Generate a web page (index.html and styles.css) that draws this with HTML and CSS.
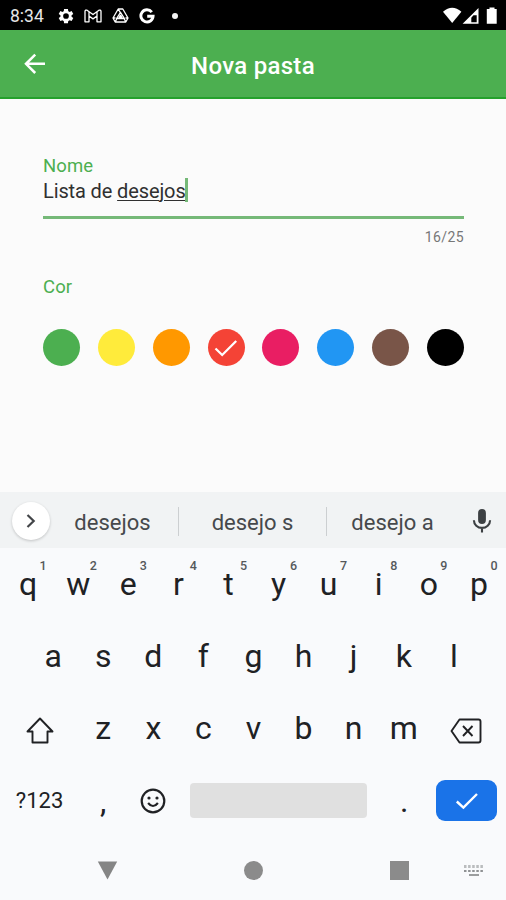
FILE: index.html
```html
<!DOCTYPE html>
<html lang="pt">
<head>
<meta charset="utf-8">
<title>Nova pasta</title>
<link rel="stylesheet" href="styles.css">
</head>
<body>
<div class="screen">
  <header class="status">
    <span class="time">8:34</span>
    <svg class="st-gear" width="18" height="18" viewBox="0 0 24 24" fill="#fff"><path fill-rule="evenodd" d="M19.4 13a7.500 7.500 0 0 0 0-2l2.300-1.700-2.200-3.900-2.700 1.100a8 8 0 0 0-1.800-1L14.600 2.500H9.400L9 5.500a8 8 0 0 0-1.800 1L4.500 5.400 2.300 9.300 4.600 11a7.500 7.500 0 0 0 0 2l-2.300 1.700 2.200 3.900 2.700-1.100a8 8 0 0 0 1.800 1l.4 3h5.200l.4-3a8 8 0 0 0 1.800-1l2.700 1.100 2.200-3.900zM12 8.200a3.800 3.800 0 1 1 0 7.600 3.800 3.800 0 0 1 0-7.600z"/></svg>
    <svg class="st-mail" width="18" height="14" viewBox="0 0 18 14" fill="none" stroke="#fff" stroke-width="1.300" stroke-linejoin="round"><path d="M1 12.800V2.200Q1.500.6 3 1.200L9 5.600l6-4.400q1.500-.6 2 1v10.600h-4V7L9 9.900 5 7v5.800zM5 7V2.800M13 7V2.800"/></svg>
    <svg class="st-drive" width="17" height="15" viewBox="0 0 17 15" fill="none" stroke="#fff" stroke-width="1.300" stroke-linejoin="round"><path d="M6.200 1h4.600l5.200 9-2.200 4H3.200L1 10zM6.200 1l2.300 4M1 10l2.500 0M16 10h-2.500M8.500 4.300l3.900 6.200H4.600zM8.500 7.200l1.500 2.300H7zM3.200 14l1.600-3.300M13.800 14l-1.600-3.300"/></svg>
    <svg class="st-google" width="16" height="16" viewBox="0 0 16 16" fill="none" stroke="#fff" stroke-width="2.900"><path d="M12.800 4.100A6.100 6.100 0 1 0 14.100 8.200H8.200"/></svg>
    <i class="st-dot"></i>
    <svg class="st-net" width="56" height="18" viewBox="0 0 56 18" fill="#fff"><path d="M0 4.700Q9.200-3.300 18.400 4.700L9.200 16z"/><path fill-rule="evenodd" d="M19.600 16.700 35.500 1v15.700zM28.300 15.200h5.400V8.300h-3.200l-2.200 2.400z"/><path d="M46.500 2V.4h5V2h2.200v14.700h-9.900V2z"/></svg>
  </header>

  <div class="appbar">
    <svg class="back" width="22" height="22" viewBox="0 0 22 22" fill="none" stroke="#fff" stroke-width="2.500"><path d="M21 10.800H2.500M11.200 1.600 2 10.800l9.200 9.200"/></svg>
    <h1>Nova pasta</h1>
  </div>

  <main class="form">
    <label class="label">Nome</label>
    <div class="field"><span>Lista de <u>desejos</u></span><i class="caret"></i></div>
    <div class="count">16/25</div>
    <div class="label cor">Cor</div>
    <div class="swatches">
      <i class="sw green"></i><i class="sw yellow"></i><i class="sw orange"></i>
      <i class="sw red"><svg width="24" height="20" viewBox="0 0 24 20" fill="none" stroke="#fff" stroke-width="2.300"><path d="M1.500 10.500 8.200 17 22.200 3"/></svg></i>
      <i class="sw pink"></i><i class="sw blue"></i><i class="sw brown"></i><i class="sw black"></i>
    </div>
  </main>

  <div class="suggest">
    <div class="more"><svg width="12" height="16" viewBox="0 0 12 16" fill="none" stroke="#424548" stroke-width="2.200"><path d="M2.500 2 8.700 8l-6.200 6"/></svg></div>
    <span class="word w1">desejos</span><span class="word w2">desejo s</span><span class="word w3">desejo a</span>
    <svg class="mic" width="20" height="26" viewBox="0 0 20 26" fill="none" stroke="#3c4043" stroke-width="2.100"><rect x="6.100" y="1" width="7.800" height="15" rx="3.900" fill="#3c4043" stroke="none"/><path d="M1.900 12.300a8.100 7.600 0 0 0 16.200 0M10 19.900v4.600"/></svg>
  </div>

  <div class="keys">
    <div class="row r1">
      <b>q<sup>1</sup></b><b>w<sup>2</sup></b><b>e<sup>3</sup></b><b>r<sup>4</sup></b><b>t<sup>5</sup></b><b>y<sup>6</sup></b><b>u<sup>7</sup></b><b>i<sup>8</sup></b><b>o<sup>9</sup></b><b>p<sup>0</sup></b>
    </div>
    <div class="row r2"><b>a</b><b>s</b><b>d</b><b>f</b><b>g</b><b>h</b><b>j</b><b>k</b><b>l</b></div>
    <div class="row r3">
      <b class="wide"><svg class="shift" width="28" height="27" viewBox="0 0 28 27" fill="none" stroke="#202124" stroke-width="1.900" stroke-linejoin="round"><path d="M14 1.500 26.500 14.500H21.500V25.500H6.500V14.500H1.500z"/></svg></b>
      <b>z</b><b>x</b><b>c</b><b>v</b><b>b</b><b>n</b><b>m</b>
      <b class="wide"><svg class="del" width="32" height="26" viewBox="0 0 32 26" fill="none" stroke="#202124" stroke-width="1.900" stroke-linejoin="round"><path d="M9.500 1.500H28.500Q30.500 1.500 30.500 3.500V22.500Q30.500 24.500 28.500 24.500H9.500L1.500 13z"/><path d="M13 8l9.500 10M22.500 8 13 18"/></svg></b>
    </div>
    <div class="row r4">
      <b class="wide sym">?123</b><b class="punct">,</b>
      <b><svg width="26" height="26" viewBox="0 0 26 26" fill="none" stroke="#202124" stroke-width="2.200"><circle cx="13" cy="13" r="11.300"/><path d="M8.100 15q4.900 6 9.800 0"/><circle cx="9" cy="10" r="1.600" fill="#202124" stroke="none"/><circle cx="17" cy="10" r="1.600" fill="#202124" stroke="none"/></svg></b>
      <b class="space"></b><b class="punct">.</b>
      <b class="enter"><svg width="24" height="20" viewBox="0 0 24 20" fill="none" stroke="#fff" stroke-width="2.400"><path d="M1.800 10.500 8.400 16.600 22 3"/></svg></b>
    </div>
  </div>

  <footer class="nav">
    <svg width="21" height="19" viewBox="0 0 21 19" fill="#858585"><path d="M.8.500H20.200L10.500 18.500z"/></svg>
    <i class="home"></i>
    <i class="recent"></i>
    <svg class="kb" width="22" height="13" viewBox="0 0 22 13" fill="none" stroke="#909294"><path stroke-width="3" stroke-dasharray="2.500 1.600" opacity=".6" d="M1 2.500h20"/><path stroke-width="2" stroke-dasharray="2.500 1.600" d="M1 7h20"/><path stroke-width="1.800" d="M6 11h10"/></svg>
  </footer>
</div>
</body>
</html>
```
FILE: styles.css
```css
* { box-sizing: border-box; }
body { margin: 0; font-family: Roboto, "Liberation Sans", sans-serif; }
i, b { font-style: normal; font-weight: 400; }
svg { display: block; flex: none; }
.screen { width: 506px; height: 900px; display: flex; flex-direction: column; background: #fbfbfb; overflow: hidden; }

.status { height: 30px; flex: none; background: #000; display: flex; align-items: center; padding: 1px 0 0 10px; color: #e6e6e6; }
.time { width: 47px; font-size: 17.500px; line-height: 29px; padding-top: 1px; }
.st-gear { margin-right: 9px; }
.st-mail { margin-right: 10px; }
.st-drive { margin-right: 10px; }
.st-google { margin-right: 17px; }
.st-dot { width: 6px; height: 6px; border-radius: 50%; background: #f4f4f4; }
.st-net { margin-left: auto; margin-right: 7px; }

.appbar { height: 69px; flex: none; background: #4caf50; border-bottom: 2px solid #25a12c; display: grid; grid-template-columns: 70px 1fr 70px; align-items: center; }
.back { margin: 1px 0 0 24px; }
h1 { margin: 0; font-size: 24px; line-height: 30px; font-weight: 500; color: #fff; text-align: center; padding-top: 4px; white-space: nowrap; letter-spacing: .3px; }

.form { height: 393px; flex: none; padding: 56px 42px 0 43px; display: flex; flex-direction: column; }
.label { font-size: 18.500px; line-height: 22px; color: #4caf50; letter-spacing: .1px; }
.field { height: 42px; border-bottom: 3px solid #75b978; display: flex; font-size: 20px; line-height: 28px; color: #303030; white-space: nowrap; letter-spacing: -.12px; }
.field u { text-decoration-thickness: 1px; text-underline-offset: 2px; }
.caret { width: 3px; height: 24px; background: #75b978; margin: 1px 0 0 -1px; }
.count { font-size: 14px; line-height: 18px; margin-top: 9px; text-align: right; color: #777; letter-spacing: .4px; }
.cor { margin-top: 30px; }
.swatches { display: flex; justify-content: space-between; margin-top: 31px; }
.sw { width: 37px; height: 37px; border-radius: 50%; display: grid; place-items: center; }
.green { background: #4caf50; }
.yellow { background: #ffeb3b; }
.orange { background: #ff9800; }
.red { background: #f44336; }
.pink { background: #e91e63; }
.blue { background: #2196f3; }
.brown { background: #795548; }
.black { background: #000; }

.suggest { height: 56px; flex: none; background: #f1f3f4; display: flex; align-items: center; padding-left: 12px; }
.more { width: 38px; height: 38px; margin-top: 2px; border-radius: 50%; background: #fff; box-shadow: 0 1px 3px rgba(0,0,0,.2); display: grid; place-items: center; }
.word { height: 29px; line-height: 31px; font-size: 22px; color: #46494c; text-align: center; white-space: nowrap; letter-spacing: 0; margin-top: 2px; }
.w1 { width: 129px; border-right: 1px solid #cccfd1; padding-right: 3px; }
.w2 { width: 148px; border-right: 1px solid #cccfd1; }
.w3 { width: 131px; }
.mic { margin: 2px 0 0 14px; }

.keys { height: 289px; flex: none; background: #f9fafc; padding: 0 2px 0 3px; display: grid; grid-template-rows: 72px 72px 73px 72px; color: #202124; }
.row { display: flex; justify-content: center; }
.row b { width: 50.100px; height: 72px; line-height: 72px; font-size: 32px; text-align: center; position: relative; }
.row sup { position: absolute; left: 36.500px; top: 10px; font-size: 12.500px; line-height: 15px; font-weight: 500; color: #55585b; }
.row .wide { width: 75.100px; }
.row b:has(svg) { display: grid; place-items: center; }
.shift { margin: 4px 2px 0 0; }
.del { margin: 6px 1px 0 0; }
.r4 { justify-content: flex-start; }
.row .sym { font-size: 22px; padding-right: 2px; }
.row .space { width: 177px; height: 35px; margin: 18px 12px 0; border-radius: 4px; background: #e0e0e0; }
.row .enter { width: 61px; height: 41px; margin: 15px 0 0 7px; border-radius: 9px; background: #1a73e8; }

.nav { height: 63px; flex: none; background: #f9fafc; display: flex; align-items: center; padding: 4px 0 0 97px; }
.home { width: 19px; height: 19px; border-radius: 50%; background: #8b8b8b; margin-left: 126px; }
.recent { width: 19px; height: 19px; background: #8b8b8b; margin-left: 127px; }
.kb { margin-left: 54px; }
```
